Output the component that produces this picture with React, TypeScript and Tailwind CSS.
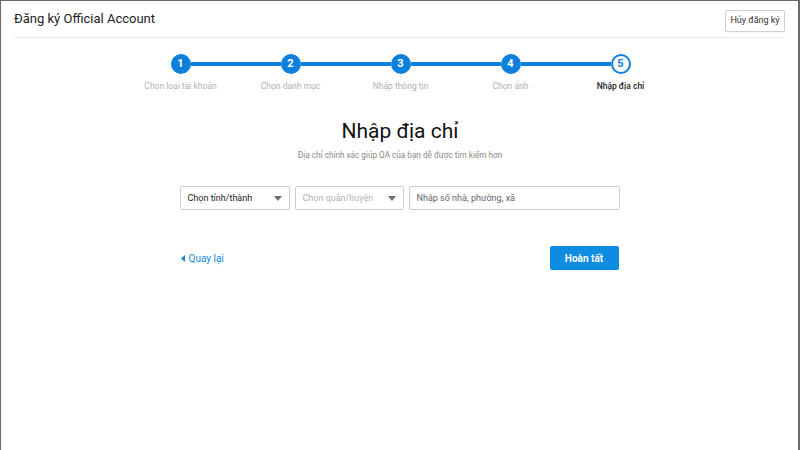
const steps = ["Chọn loại tài khoản", "Chọn danh mục", "Nhập thông tin", "Chọn ảnh", "Nhập địa chỉ"];

function Caret() {
  return (
    <svg width="8" height="5" viewBox="0 0 8 5" className="shrink-0">
      <path d="M0 0h8L4 5z" fill="#707070" />
    </svg>
  );
}

export default function App() {
  return (
    <div
      className="w-[800px] h-[450px] bg-white border-l border-t border-r-2 border-[#6a6a6a] overflow-hidden text-[#333]"
      style={{ fontFamily: "Roboto, 'Noto Sans', sans-serif" }}
    >
      {/* Header */}
      <div className="mx-[13px] h-[37px] flex items-center justify-between border-b border-[#e9e9e9]">
        <div className="text-[13px] text-[#222]">Đăng ký Official Account</div>
        <button className="h-[22px] w-[60px] mt-[3px] border border-[#cfcfcf] rounded-[2px] text-[9px] text-[#333] bg-white shadow-[0_1px_1px_rgba(0,0,0,0.05)]">
          Hủy đăng ký
        </button>
      </div>

      {/* Steps */}
      <div className="mt-[16px] pl-[2px] flex justify-center">
        {steps.map((label, i) => {
          const last = i === steps.length - 1;
          return (
            <div key={label} className="w-[110px] flex flex-col items-center">
              <div className="w-full flex items-center">
                <div className={`flex-1 h-[4px] ${i === 0 ? "" : "bg-[#0d80dc]"}`} />
                {last ? (
                  <div className="w-[20px] h-[20px] rounded-full border-2 border-[#0d80dc] bg-white flex items-center justify-center text-[11px] font-bold text-[#0d80dc]">
                    {i + 1}
                  </div>
                ) : (
                  <div className="w-[20px] h-[20px] rounded-full bg-[#0d80dc] flex items-center justify-center text-[11px] font-bold text-white">
                    {i + 1}
                  </div>
                )}
                <div className={`flex-1 h-[4px] ${last ? "" : "bg-[#0d80dc]"}`} />
              </div>
              <div
                className={`mt-[7px] text-[8.5px] leading-[11px] whitespace-nowrap ${
                  last ? "text-[#222] font-medium" : "text-[#b0b0b0]"
                }`}
              >
                {label}
              </div>
            </div>
          );
        })}
      </div>

      {/* Title */}
      <div className="mt-[26px] pl-[1px] text-center">
        <h1 className="text-[21px] leading-[26px] text-[#111]">Nhập địa chỉ</h1>
        <p className="mt-[5px] text-[8.2px] text-[#8a8a8a]">
          Địa chỉ chính xác giúp OA của bạn dễ được tìm kiếm hơn
        </p>
      </div>

      {/* Address form */}
      <div className="mx-auto w-[440px] mt-[25px]">
        <div className="flex gap-[5px] h-[24px]">
          <div className="w-[110px] border border-[#cdcdcd] rounded-[2px] flex items-center justify-between px-[7px]">
            <span className="text-[9px] text-[#222]">Chọn tỉnh/thành</span>
            <Caret />
          </div>
          <div className="w-[109px] border border-[#cdcdcd] rounded-[2px] flex items-center justify-between px-[7px]">
            <span className="text-[9px] text-[#b3b3b3]">Chọn quận/huyện</span>
            <Caret />
          </div>
          <div className="flex-1 border border-[#cdcdcd] rounded-[2px] flex items-center px-[7px]">
            <span className="text-[9px] text-[#666]">Nhập số nhà, phường, xã</span>
          </div>
        </div>

        <div className="mt-[36px] flex items-center justify-between">
          <div className="flex items-center gap-[4px] text-[#1787d8] text-[10px] pl-[1px]">
            <svg width="4" height="7" viewBox="0 0 4 7">
              <path d="M4 0v7L0 3.5z" fill="#1787d8" />
            </svg>
            <span>Quay lại</span>
          </div>
          <button className="w-[69px] h-[24px] mr-[1px] rounded-[2px] bg-[#0e8ce2] text-white text-[10px] font-bold">
            Hoàn tất
          </button>
        </div>
      </div>
    </div>
  );
}
